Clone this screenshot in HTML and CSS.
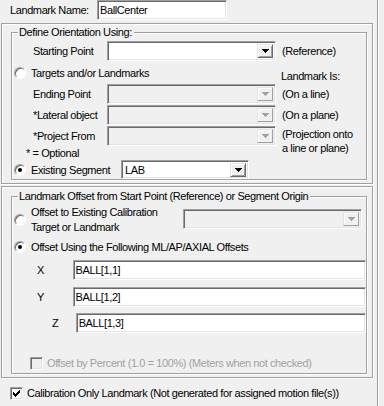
FILE: index.html
```html
<!DOCTYPE html>
<html>
    <head>
        <link rel="stylesheet" href="styles.css">
    </head>
    <body>
        <div class="page">
        <div class="nameRow">
            <span class="nameLabel">Landmark Name:</span>
            <div class="edit nameEdit">BallCenter</div>
        </div>

        <div class="panel topPanel">
            <fieldset class="group orientGroup">
                <legend>Define Orientation Using:</legend>
                <div class="row comboRow firstRow">
                    <span class="fieldLabel">Starting Point</span>
                    <div class="combo">
                        <span class="comboText"></span>
                        <span class="comboBtn"><svg width="7" height="4" shape-rendering="crispEdges"><path d="M0 0h7v1H0zM1 1h5v1H1zM2 2h3v1H2zM3 3h1v1H3z"/></svg></span>
                    </div>
                    <span class="note">(Reference)</span>
                </div>
                <div class="row radioRow targetsRow">
                    <span class="radio"></span>
                    <span class="radioText clipped">Targets and/or Landmarks</span>
                    <span class="note landmarkIs">Landmark Is:</span>
                </div>
                <div class="row comboRow">
                    <span class="fieldLabel">Ending Point</span>
                    <div class="combo disabled">
                        <span class="comboText"></span>
                        <span class="comboBtn"><svg width="7" height="4" shape-rendering="crispEdges"><path d="M0 0h7v1H0zM1 1h5v1H1zM2 2h3v1H2zM3 3h1v1H3z"/></svg></span>
                    </div>
                    <span class="note">(On a line)</span>
                </div>
                <div class="row comboRow">
                    <span class="fieldLabel">*Lateral object</span>
                    <div class="combo disabled">
                        <span class="comboText"></span>
                        <span class="comboBtn"><svg width="7" height="4" shape-rendering="crispEdges"><path d="M0 0h7v1H0zM1 1h5v1H1zM2 2h3v1H2zM3 3h1v1H3z"/></svg></span>
                    </div>
                    <span class="note">(On a plane)</span>
                </div>
                <div class="row comboRow">
                    <span class="fieldLabel">*Project From</span>
                    <div class="combo disabled">
                        <span class="comboText"></span>
                        <span class="comboBtn"><svg width="7" height="4" shape-rendering="crispEdges"><path d="M0 0h7v1H0zM1 1h5v1H1zM2 2h3v1H2zM3 3h1v1H3z"/></svg></span>
                    </div>
                    <span class="note twoLines">(Projection onto<br>a line or plane)</span>
                </div>
                <div class="row optionalRow">* = Optional</div>
                <div class="row radioRow segmentRow">
                    <span class="radio on"></span>
                    <span class="radioText segmentText">Existing Segment</span>
                    <div class="combo segmentCombo">
                        <span class="comboText">LAB</span>
                        <span class="comboBtn"><svg width="7" height="4" shape-rendering="crispEdges"><path d="M0 0h7v1H0zM1 1h5v1H1zM2 2h3v1H2zM3 3h1v1H3z"/></svg></span>
                    </div>
                </div>
            </fieldset>
        </div>

        <div class="panel bottomPanel">
            <fieldset class="group offsetGroup">
                <legend>Landmark Offset from Start Point (Reference) or Segment Origin</legend>
                <div class="row radioRow existingRow">
                    <span class="radio"></span>
                    <span class="radioText twoLineText">Offset to Existing Calibration<br>Target or Landmark</span>
                    <div class="combo disabled calCombo">
                        <span class="comboText"></span>
                        <span class="comboBtn"><svg width="7" height="4" shape-rendering="crispEdges"><path d="M0 0h7v1H0zM1 1h5v1H1zM2 2h3v1H2zM3 3h1v1H3z"/></svg></span>
                    </div>
                </div>
                <div class="row radioRow usingRow">
                    <span class="radio on"></span>
                    <span class="radioText">Offset Using the Following ML/AP/AXIAL Offsets</span>
                </div>
                <div class="row axisRow xRow">
                    <span class="axisLabel">X</span>
                    <div class="edit axisEdit">BALL[1,1]</div>
                </div>
                <div class="row axisRow yRow">
                    <span class="axisLabel">Y</span>
                    <div class="edit axisEdit">BALL[1,2]</div>
                </div>
                <div class="row axisRow zRow">
                    <span class="axisLabel">Z</span>
                    <div class="edit axisEdit">BALL[1,3]</div>
                </div>
                <div class="row checkRow percentRow">
                    <span class="check disabled"></span>
                    <span class="checkText">Offset by Percent (1.0 = 100%) (Meters when not checked)</span>
                </div>
            </fieldset>
        </div>

        <div class="row checkRow calibrationRow">
            <span class="check"><svg width="7" height="7" shape-rendering="crispEdges"><path d="M6 0h1v1H6zM5 1h2v1H5zM0 2h1v1H0zM4 2h3v1H4zM0 3h2v1H0zM3 3h3v1H3zM0 4h5v1H0zM1 5h3v1H1zM2 6h1v1H2z"/></svg></span>
            <span class="checkText">Calibration Only Landmark (Not generated for assigned motion file(s))</span>
        </div>
        </div>
    </body>
</html>
```

FILE: styles.css
```css
body {
    margin: 0;
    width: 384px;
    height: 406px;
    background: #f0f0f0;
    font-family: "Liberation Sans", Arial, sans-serif;
    font-size: 11px;
    letter-spacing: -0.4px;
    color: #000;
    overflow: hidden;
}

.page {
    box-sizing: border-box;
    width: 378px;
    height: 406px;
    border-right: 1px solid #a0a0a0;
    box-shadow: 1px 0 0 #fff;
}

/* classic sunken edit box */
.edit {
    box-sizing: border-box;
    height: 20px;
    padding: 0 2px;
    line-height: 18px;
    background: #fff;
    border: 1px solid;
    border-color: #a0a0a0 #fff #fff #a0a0a0;
    box-shadow: inset 1px 1px 0 #696969, inset -1px -1px 0 #e3e3e3;
    white-space: nowrap;
    overflow: hidden;
}

.nameRow {
    display: flex;
    height: 23px;
}

.nameLabel {
    width: 87px;
    padding-left: 10px;
    line-height: 20px;
}

.nameEdit {
    width: 130px;
}

.panel {
    box-sizing: border-box;
    width: 372px;
    margin-left: 1px;
    padding: 2px 4px 0 9px;
    border: 1px solid #a0a0a0;
    box-shadow: inset 1px 1px 0 #fff, 1px 1px 0 #fff;
}

.topPanel {
    height: 161px;
}

.bottomPanel {
    height: 192px;
    margin-top: 2px;
    padding-top: 3px;
}

.group {
    box-sizing: border-box;
    margin: 0;
    padding: 0;
    min-width: 0;
    border: 1px solid #a0a0a0;
    box-shadow: inset 1px 1px 0 #fff, 1px 1px 0 #fff;
}

.group legend {
    margin-left: 6px;
    padding: 0 2px 0 1px;
    line-height: 13px;
    background: #f0f0f0;
}

.orientGroup {
    width: 356px;
    height: 154px;
}

.offsetGroup {
    width: 356px;
    height: 184px;
}

.row {
    display: flex;
    align-items: center;
    white-space: nowrap;
}

.comboRow {
    height: 20px;
    margin-top: 1px;
}

.firstRow {
    margin-top: 2px;
}

.fieldLabel {
    box-sizing: border-box;
    width: 95px;
    padding-left: 21px;
}

.note {
    margin-left: 6px;
}

.combo {
    box-sizing: border-box;
    display: flex;
    width: 169px;
    height: 20px;
    padding: 2px;
    background: #fff;
    border: 1px solid;
    border-color: #a0a0a0 #fff #fff #a0a0a0;
    box-shadow: inset 1px 1px 0 #696969, inset -1px -1px 0 #e3e3e3;
}

.comboText {
    flex: 1;
    line-height: 14px;
    padding-left: 1px;
}

.comboBtn {
    box-sizing: border-box;
    display: flex;
    align-items: center;
    justify-content: center;
    width: 16px;
    height: 14px;
    background: #f0f0f0;
    border: 1px solid;
    border-color: #e3e3e3 #696969 #696969 #e3e3e3;
    box-shadow: inset 1px 1px 0 #fff, inset -1px -1px 0 #a0a0a0;
}

.comboBtn svg {
    fill: #000;
}

.combo.disabled {
    background: #f0f0f0;
}

.combo.disabled .comboBtn {
    border-color: #e3e3e3 #a0a0a0 #a0a0a0 #e3e3e3;
    box-shadow: inset 1px 1px 0 #fff;
}

.combo.disabled .comboBtn svg {
    fill: #a0a0a0;
}

.radioRow {
    padding-left: 2px;
}

.radio {
    box-sizing: border-box;
    display: flex;
    align-items: center;
    justify-content: center;
    flex: none;
    width: 12px;
    height: 12px;
    border-radius: 50%;
    background: #fff;
    border: 1px solid;
    border-color: #a0a0a0 #fff #fff #a0a0a0;
    box-shadow: inset 1px 1px 0 #696969;
}

.radio.on::after {
    content: "";
    width: 4px;
    height: 4px;
    border-radius: 50%;
    background: #000;
}

.radioText {
    margin-left: 5px;
}

.targetsRow {
    height: 21px;
    margin-top: 1px;
}

.clipped {
    width: 124px;
    overflow: hidden;
}

.landmarkIs {
    align-self: flex-end;
    margin-left: 126px;
    line-height: 13px;
}

.twoLines {
    align-self: flex-start;
    margin-top: 1px;
    line-height: 14px;
}

.optionalRow {
    height: 13px;
    padding-left: 14px;
}

.segmentRow {
    height: 19px;
    margin-top: 1px;
}

.segmentText {
    width: 90px;
}

.segmentCombo {
    width: 128px;
    height: 19px;
}

.existingRow {
    height: 30px;
    margin-top: 2px;
}

.twoLineText {
    width: 152px;
    line-height: 15px;
}

.calCombo {
    width: 179px;
    margin-top: -2px;
}

.usingRow {
    height: 14px;
    margin-top: 5px;
}

.axisRow {
    height: 20px;
}

.xRow {
    margin-top: 6px;
}

.yRow {
    margin-top: 7px;
}

.zRow {
    margin-top: 6px;
}

.axisLabel {
    box-sizing: border-box;
    width: 61px;
    padding-left: 25px;
}

.zRow .axisLabel {
    width: 64px;
    padding-left: 40px;
}

.axisEdit {
    width: 297px;
}

.zRow .axisEdit {
    width: 294px;
}

.checkRow {
    height: 14px;
}

.check {
    box-sizing: border-box;
    display: flex;
    align-items: center;
    justify-content: center;
    flex: none;
    width: 13px;
    height: 13px;
    background: #fff;
    border: 1px solid;
    border-color: #a0a0a0 #fff #fff #a0a0a0;
    box-shadow: inset 1px 1px 0 #696969, inset -1px -1px 0 #e3e3e3;
}

.check.disabled {
    background: #f0f0f0;
}

.checkText {
    margin-left: 4px;
}

.percentRow {
    margin-top: 23px;
    padding-left: 18px;
}

.percentRow .checkText {
    color: #a0a0a0;
}

.calibrationRow {
    margin-top: 8px;
    padding-left: 10px;
}
```
